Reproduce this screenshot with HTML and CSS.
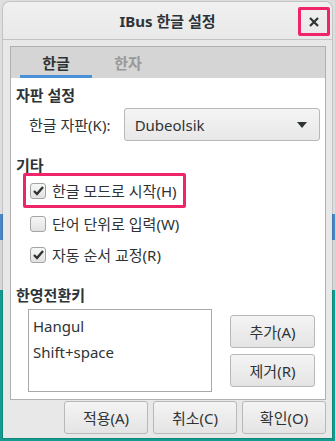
FILE: index.html
```html
<!DOCTYPE html>
<html lang="ko">
<head>
    <meta charset="UTF-8">
    <title>IBus 한글 설정</title>
    <link rel="stylesheet" href="styles.css">
</head>
<body>
    <div class="window">
        <div class="titlebar">
            <span></span>
            <h1 class="title">IBus 한글 설정</h1>
            <div class="close-wrap">
                <button class="close">
                    <svg width="10" height="10" viewBox="0 0 10 10"><path d="M1 1L9 9M9 1L1 9" stroke="#2e3436" stroke-width="2.2"/></svg>
                </button>
            </div>
        </div>

        <div class="dialog-body">
            <div class="notebook">
                <div class="tabs">
                    <div class="tab active">한글</div>
                    <div class="tab">한자</div>
                </div>

                <div class="page">
                    <h2 class="section">자판 설정</h2>
                    <div class="row">
                        <span class="label">한글 자판(K):</span>
                        <div class="combo">
                            <span>Dubeolsik</span>
                            <svg width="10" height="6" viewBox="0 0 10 6"><path d="M0 0H10L5 6Z" fill="#2e3436"/></svg>
                        </div>
                    </div>

                    <h2 class="section">기타</h2>
                    <div class="checks">
                        <label class="check highlight">
                            <span class="box"><svg width="11" height="10" viewBox="0 0 11 10"><path d="M1 5L4 8L10 1" fill="none" stroke="#2e3436" stroke-width="2.4"/></svg></span>
                            한글 모드로 시작(H)
                        </label>
                        <label class="check">
                            <span class="box"></span>
                            단어 단위로 입력(W)
                        </label>
                        <label class="check">
                            <span class="box"><svg width="11" height="10" viewBox="0 0 11 10"><path d="M1 5L4 8L10 1" fill="none" stroke="#2e3436" stroke-width="2.4"/></svg></span>
                            자동 순서 교정(R)
                        </label>
                    </div>

                    <h2 class="section">한영전환키</h2>
                    <div class="keys">
                        <div class="key-list">
                            <div>Hangul</div>
                            <div>Shift+space</div>
                        </div>
                        <div class="key-buttons">
                            <button class="btn">추가(A)</button>
                            <button class="btn">제거(R)</button>
                        </div>
                    </div>
                </div>
            </div>

            <div class="actions">
                <button class="btn">적용(A)</button>
                <button class="btn">취소(C)</button>
                <button class="btn">확인(O)</button>
            </div>
        </div>
    </div>
</body>
</html>
```

FILE: styles.css
```css
body {
    margin: 0;
    height: 441px;
    overflow: hidden;
    font-family: "Noto Sans", "Noto Sans CJK KR", sans-serif;
    font-size: 15px;
    color: #2e3436;
    background: linear-gradient(to bottom, #dedede 0, #dedede 214px, #4a86c8 214px, #4a86c8 240px, #d6d6d6 240px, #d6d6d6 290px, #149a8e 290px);
}

.window {
    margin: 2px 3px 0;
    height: 436px;
    background-color: #e8e8e8;
    border-radius: 7px 7px 0 0;
    box-shadow: 0 0 0 1px rgba(0, 0, 0, 0.12);
    display: flex;
    flex-direction: column;
}

.titlebar {
    height: 37px;
    display: grid;
    grid-template-columns: 1fr auto 1fr;
    align-items: center;
    background: linear-gradient(#f0f0f0, #e9e9e9);
    border-bottom: 1px solid #c2c2c2;
    border-radius: 7px 7px 0 0;
}

.title {
    margin: 0;
    font-size: 15px;
    font-weight: bold;
    color: #2e3436;
}

.close-wrap {
    display: flex;
    justify-content: flex-end;
    padding-right: 2px;
}

.close {
    width: 32px;
    height: 29px;
    margin-top: 2px;
    border: 3px solid #f0246a;
    border-radius: 2px;
    background: transparent;
    display: flex;
    align-items: center;
    justify-content: center;
    padding: 0;
}

.dialog-body {
    flex: 1;
    padding: 6px 6px 0 7px;
    display: flex;
    flex-direction: column;
}

.notebook {
    border: 1px solid #b0b0b0;
    display: flex;
    flex-direction: column;
}

.tabs {
    height: 31px;
    background-color: #d5d5d5;
    display: flex;
    padding-left: 9px;
}

.tab {
    width: 72px;
    display: flex;
    align-items: center;
    justify-content: center;
    font-size: 15px;
    font-weight: bold;
    color: #999;
}

.tab.active {
    color: #2e3436;
    box-shadow: inset 0 -3px 0 #4a90d9;
}

.page {
    height: 321px;
    background-color: white;
    padding: 0 5px;
    box-sizing: border-box;
}

.section {
    margin: 0;
    font-size: 15px;
    font-weight: bold;
    line-height: 20px;
}

.page > .section:first-child {
    margin-top: 7px;
}

.row {
    display: flex;
    align-items: center;
    margin: 3px 0 0 13px;
}

.label {
    width: 95px;
}

.combo {
    width: 197px;
    height: 33px;
    box-sizing: border-box;
    border: 1px solid #b8b8b8;
    border-radius: 3px;
    background: linear-gradient(#f4f4f4, #e8e8e8);
    display: flex;
    align-items: center;
    justify-content: space-between;
    padding: 0 12px 0 10px;
}

.row + .section {
    margin-top: 14px;
}

.checks {
    display: flex;
    flex-direction: column;
    align-items: flex-start;
    margin: -2px 0 0 7px;
}

.check {
    display: flex;
    align-items: center;
    gap: 6px;
    height: 31px;
    padding-left: 7px;
    white-space: nowrap;
}

.highlight {
    height: 29px;
    border: 3px solid #f0246a;
    border-radius: 2px;
    padding: 0 6px 0 4px;
}

.box {
    width: 14px;
    height: 14px;
    border: 1px solid #a4a4a4;
    border-radius: 3px;
    background: linear-gradient(#f6f6f6, #e2e2e2);
    display: flex;
    align-items: center;
    justify-content: center;
}

.checks + .section {
    margin-top: 15px;
}

.keys {
    display: flex;
    gap: 18px;
    margin: 4px 0 0 12px;
}

.key-list {
    width: 184px;
    height: 83px;
    box-sizing: border-box;
    border: 1px solid #a8a8a8;
    padding: 3px 4px;
    line-height: 26px;
}

.key-buttons {
    display: flex;
    flex-direction: column;
    gap: 6px;
    padding-top: 6px;
}

.btn {
    width: 85px;
    height: 33px;
    border: 1px solid #b8b8b8;
    border-radius: 3px;
    background: linear-gradient(#f4f4f4, #e4e4e4);
    font-family: inherit;
    font-size: 15px;
    color: #2e3436;
    padding: 0;
}

.actions {
    display: flex;
    justify-content: flex-end;
    gap: 5px;
    padding-top: 1px;
}

.actions .btn {
    width: 84px;
}
```
